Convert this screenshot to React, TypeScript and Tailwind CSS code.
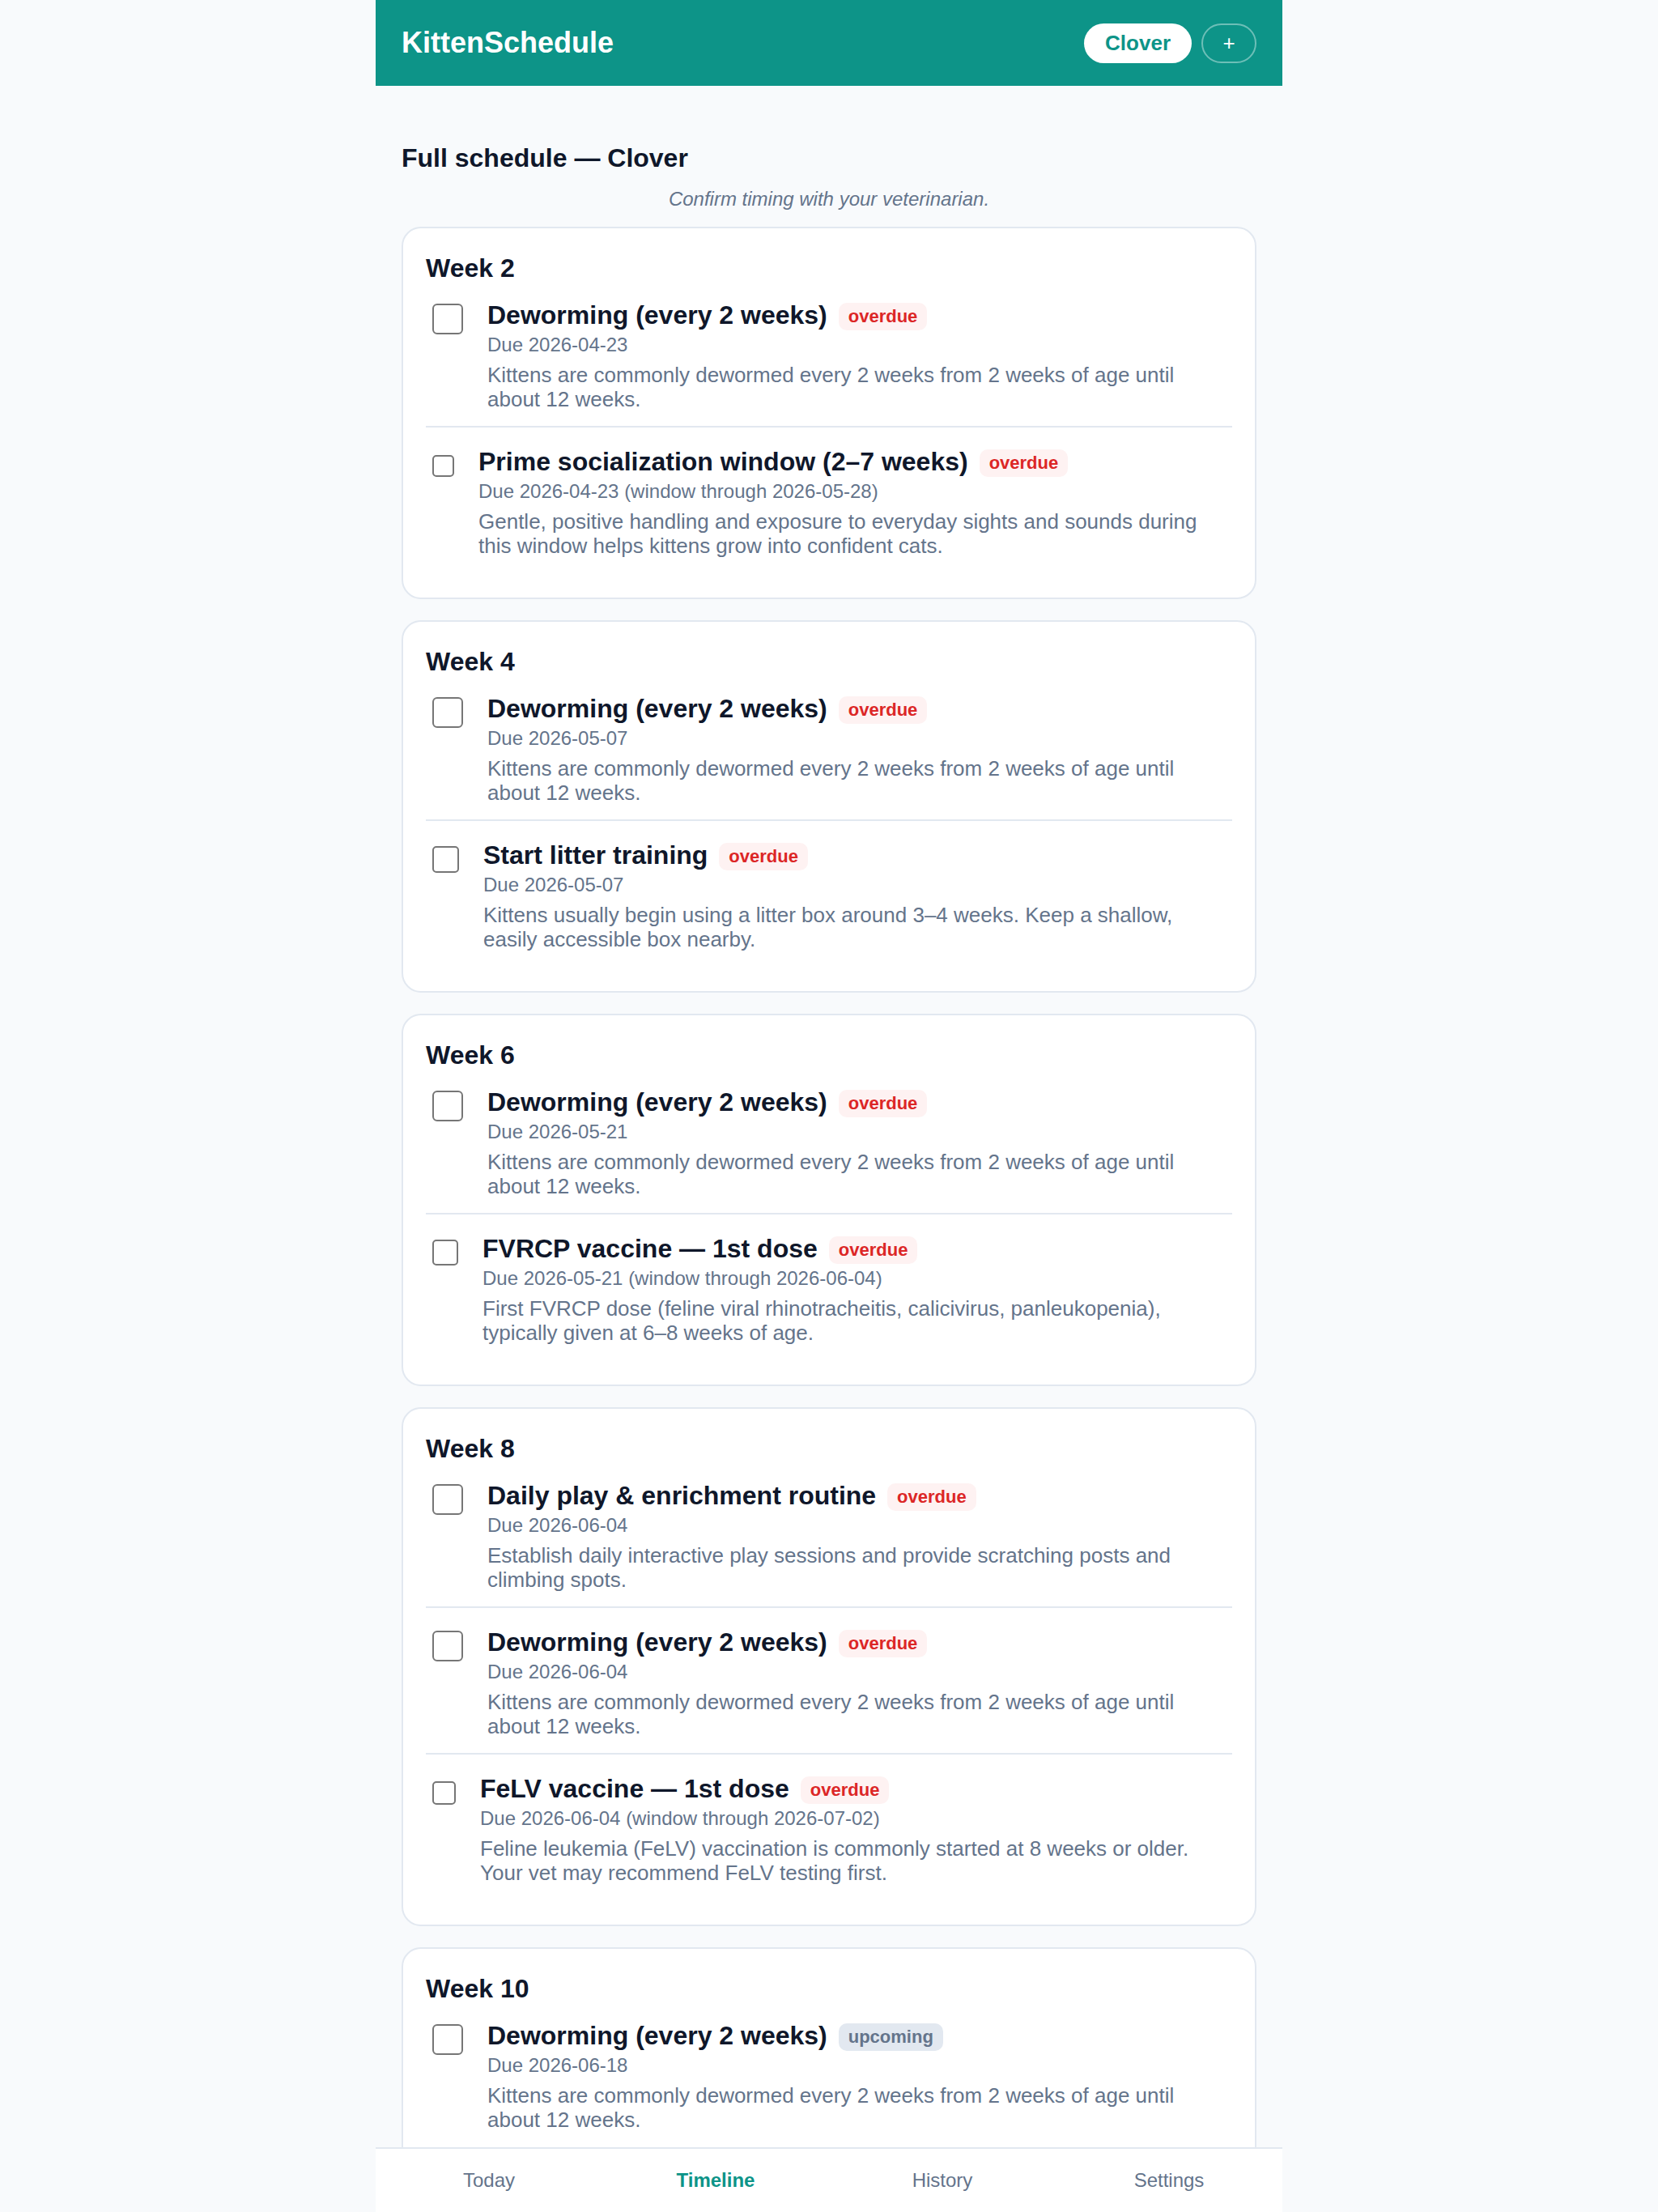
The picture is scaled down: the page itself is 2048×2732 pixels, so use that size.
import React from 'react';

type Status = 'overdue' | 'upcoming';

type Task = {
  title: string;
  due: string;
  note: string;
  status: Status;
  box: string;
};

type Week = { week: number; tasks: Task[] };

const DEWORM_NOTE =
  'Kittens are commonly dewormed every 2 weeks from 2 weeks of age until about 12 weeks.';

const BOX_LG = 'w-[38px] h-[38px] rounded-[6px]';

const weeks: Week[] = [
  {
    week: 2,
    tasks: [
      { title: 'Deworming (every 2 weeks)', due: 'Due 2026-04-23', note: DEWORM_NOTE, status: 'overdue', box: BOX_LG },
      {
        title: 'Prime socialization window (2–7 weeks)',
        due: 'Due 2026-04-23 (window through 2026-05-28)',
        note: 'Gentle, positive handling and exposure to everyday sights and sounds during this window helps kittens grow into confident cats.',
        status: 'overdue',
        box: 'w-[27px] h-[27px] rounded-[5px]',
      },
    ],
  },
  {
    week: 4,
    tasks: [
      { title: 'Deworming (every 2 weeks)', due: 'Due 2026-05-07', note: DEWORM_NOTE, status: 'overdue', box: BOX_LG },
      {
        title: 'Start litter training',
        due: 'Due 2026-05-07',
        note: 'Kittens usually begin using a litter box around 3–4 weeks. Keep a shallow, easily accessible box nearby.',
        status: 'overdue',
        box: 'w-[33px] h-[33px] rounded-[5px]',
      },
    ],
  },
  {
    week: 6,
    tasks: [
      { title: 'Deworming (every 2 weeks)', due: 'Due 2026-05-21', note: DEWORM_NOTE, status: 'overdue', box: BOX_LG },
      {
        title: 'FVRCP vaccine — 1st dose',
        due: 'Due 2026-05-21 (window through 2026-06-04)',
        note: 'First FVRCP dose (feline viral rhinotracheitis, calicivirus, panleukopenia), typically given at 6–8 weeks of age.',
        status: 'overdue',
        box: 'w-[32px] h-[32px] rounded-[5px]',
      },
    ],
  },
  {
    week: 8,
    tasks: [
      {
        title: 'Daily play & enrichment routine',
        due: 'Due 2026-06-04',
        note: 'Establish daily interactive play sessions and provide scratching posts and climbing spots.',
        status: 'overdue',
        box: BOX_LG,
      },
      { title: 'Deworming (every 2 weeks)', due: 'Due 2026-06-04', note: DEWORM_NOTE, status: 'overdue', box: BOX_LG },
      {
        title: 'FeLV vaccine — 1st dose',
        due: 'Due 2026-06-04 (window through 2026-07-02)',
        note: 'Feline leukemia (FeLV) vaccination is commonly started at 8 weeks or older. Your vet may recommend FeLV testing first.',
        status: 'overdue',
        box: 'w-[29px] h-[29px] rounded-[5px]',
      },
    ],
  },
  {
    week: 10,
    tasks: [
      { title: 'Deworming (every 2 weeks)', due: 'Due 2026-06-18', note: DEWORM_NOTE, status: 'upcoming', box: BOX_LG },
    ],
  },
];

const tabs = ['Today', 'Timeline', 'History', 'Settings'];

const StatusBadge = ({ status }: { status: Status }) => (
  <span
    className={
      status === 'overdue'
        ? 'mt-[4px] shrink-0 rounded-[10px] bg-[#fef2f2] px-[12px] text-[22px] font-bold leading-[34px] text-[#dc2626]'
        : 'mt-[4px] shrink-0 rounded-[10px] bg-[#e2e8f0] px-[12px] text-[22px] font-bold leading-[34px] text-[#64748b]'
    }
  >
    {status}
  </span>
);

const TaskRow = ({ task, first }: { task: Task; first: boolean }) => (
  <li className={first ? 'flex items-start pt-[20px] pb-[18px]' : 'flex items-start border-t-2 border-[#e2e8f0] pt-[22px] pb-[18px]'}>
    <div className="ml-[8px] mr-[30px] mt-[6px] flex h-[38px] shrink-0 items-center">
      <input
        type="checkbox"
        aria-label={task.title}
        className={`${task.box} block appearance-none border-2 border-[#767676] bg-white`}
      />
    </div>
    <div className="min-w-0 flex-1 pr-[4px]">
      <div className="flex flex-wrap items-center gap-x-[14px]">
        <h4 className="text-[32px] font-bold leading-[40px] text-[#0f172a]">{task.title}</h4>
        <StatusBadge status={task.status} />
      </div>
      <p className="mt-[1px] text-[24px] leading-[32px] text-[#64748b]">{task.due}</p>
      <p className="mt-[6px] text-[26px] leading-[30px] text-[#64748b]">{task.note}</p>
    </div>
  </li>
);

const WeekCard = ({ week }: { week: Week }) => (
  <section className="rounded-[24px] border-2 border-[#e2e8f0] bg-white px-[28px] py-[31px]">
    <h3 className="text-[32px] font-bold leading-[36px] text-[#0f172a]">Week {week.week}</h3>
    <ul>
      {week.tasks.map((t, i) => (
        <TaskRow key={t.title + i} task={t} first={i === 0} />
      ))}
    </ul>
  </section>
);

export default function App() {
  return (
    <div className="flex h-screen flex-col overflow-hidden bg-[#f8fafc] font-['Liberation_Sans',Arial,sans-serif]">
      <div className="mx-auto flex h-full w-full max-w-[1120px] flex-col">
        {/* Top bar */}
        <header className="flex h-[106px] shrink-0 items-center justify-between bg-[#0d9488] px-[32px]">
          <h1 className="text-[36px] font-bold text-white">KittenSchedule</h1>
          <div className="flex items-center gap-[12px]">
            <button className="h-[49px] rounded-full bg-white px-[26px] text-[26px] font-bold text-[#0d9488]">
              Clover
            </button>
            <button className="h-[49px] w-[68px] rounded-full border-2 border-white/40 text-[26px] text-white">
              +
            </button>
          </div>
        </header>

        <main className="min-h-0 flex-1 overflow-hidden px-[32px] pt-[69px]">
          <h2 className="text-[32px] font-bold leading-[40px] text-[#0f172a]">Full schedule — Clover</h2>
          <p className="mt-[15px] text-center text-[24px] italic leading-[32px] text-[#64748b]">
            Confirm timing with your veterinarian.
          </p>
          <div className="mt-[18px] flex flex-col gap-[26px]">
            {weeks.map((w) => (
              <WeekCard key={w.week} week={w} />
            ))}
          </div>
        </main>

        {/* Bottom tabs */}
        <nav className="grid h-[80px] shrink-0 grid-cols-4 border-t-2 border-[#e2e8f0] bg-white">
          {tabs.map((tab) => (
            <button
              key={tab}
              className={
                tab === 'Timeline'
                  ? 'text-[24px] font-bold text-[#0d9488]'
                  : 'text-[24px] text-[#64748b]'
              }
            >
              {tab}
            </button>
          ))}
        </nav>
      </div>
    </div>
  );
}
